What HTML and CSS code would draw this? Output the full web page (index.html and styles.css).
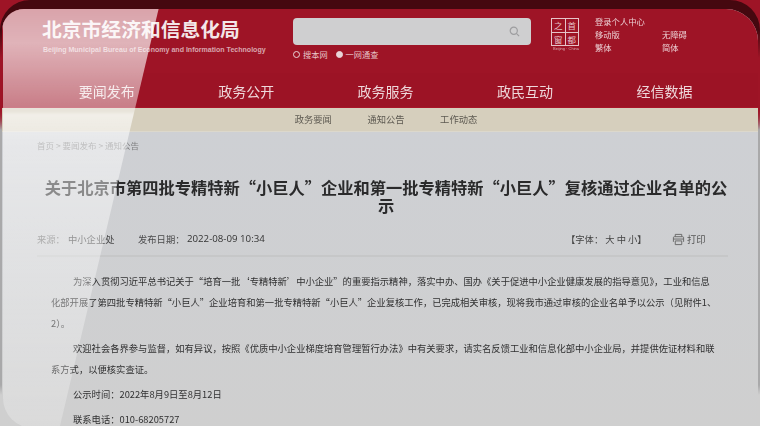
FILE: index.html
```html
<!DOCTYPE html>
<html lang="zh-CN">
<head>
<meta charset="utf-8">
<title>关于北京市第四批专精特新“小巨人”企业和第一批专精特新“小巨人”复核通过企业名单的公示</title>
<link rel="stylesheet" href="styles.css">
</head>
<body>
<div class="bezel">
  <div class="screen">
    <div class="content">
      <header class="header">
        <div class="brand">
          <div class="brand-cn">北京市经济和信息化局</div>
          <div class="brand-en">Beijing Municipal Bureau of Economy and Information Technology</div>
        </div>
        <div class="search">
          <div class="search-box">
            <svg class="search-icon" viewBox="0 0 12 12" width="11" height="11"><circle cx="5.2" cy="5.2" r="3.9" fill="none" stroke="#9d9d9f" stroke-width="1.3"/><path d="M8 8l3 3" stroke="#9d9d9f" stroke-width="1.3"/></svg>
          </div>
          <div class="scopes">
            <span class="scope"><i class="radio"></i>搜本网</span>
            <span class="scope"><i class="radio radio-on"></i>一网通查</span>
          </div>
        </div>
        <div class="seal">
          <div class="seal-box"><span>之</span><span>首</span><span>窗</span><span>都</span></div>
          <div class="seal-cap">Beijing · China</div>
        </div>
        <div class="links">
          <a class="link link-wide">登录个人中心</a>
          <a class="link">移动版</a><a class="link">无障碍</a>
          <a class="link">繁体</a><a class="link">简体</a>
        </div>
      </header>
      <nav class="nav">
        <a class="nav-item">要闻发布</a>
        <a class="nav-item">政务公开</a>
        <a class="nav-item">政务服务</a>
        <a class="nav-item">政民互动</a>
        <a class="nav-item">经信数据</a>
      </nav>
      <div class="subnav">
        <a>政务要闻</a><a>通知公告</a><a>工作动态</a>
      </div>
      <main class="main">
        <div class="crumb">首页 &gt; 要闻发布 &gt; 通知公告</div>
        <h1 class="title">关于北京市第四批专精特新“小巨人”企业和第一批专精特新“小巨人”复核通过企业名单的公示</h1>
        <div class="meta">
          <span class="meta-source">来源&#65306;</span><span class="meta-org">中小企业处</span>
          <span class="meta-date">发布日期&#65306;</span><span class="meta-time">2022-08-09 10:34</span>
          <span class="meta-font">【字体&#65306; 大 中 小】</span>
          <span class="meta-print">
            <svg viewBox="0 0 14 14" width="13" height="13"><path d="M3.5 4V1.500h7V4M1.500 9.500V5a1 1 0 0 1 1-1h9a1 1 0 0 1 1 1v4.500M1.500 6.500h11" fill="none" stroke="#666" stroke-width="1"/><path d="M3.500 8.500h7v4h-7z" fill="none" stroke="#666" stroke-width="1"/></svg>打印
          </span>
        </div>
        <article class="article">
          <p>为深入贯彻习近平总书记关于“培育一批‘专精特新’中小企业”的重要指示精神&#65292;落实中办、国办《关于促进中小企业健康发展的指导意见》&#65292;工业和信息化部开展了第四批专精特新“小巨人”企业培育和第一批专精特新“小巨人”企业复核工作&#65292;已完成相关审核&#65292;现将我市通过审核的企业名单予以公示&#65288;见附件1、2&#65289;。</p>
          <p>欢迎社会各界参与监督&#65292;如有异议&#65292;按照《优质中小企业梯度培育管理暂行办法》中有关要求&#65292;请实名反馈工业和信息化部中小企业局&#65292;并提供佐证材料和联系方式&#65292;以便核实查证。</p>
          <p>公示时间&#65306;2022年8月9日至8月12日</p>
          <p class="article-last">联系电话&#65306;010-68205727</p>
        </article>
      </main>
    </div>
    <div class="gloss"></div>
  </div>
</div>
</body>
</html>
```

FILE: styles.css
```css
html, body {
  margin: 0;
  padding: 0;
  height: 100%;
}
body {
  width: 760px;
  height: 426px;
  overflow: hidden;
  background: linear-gradient(#9e1426 0, #9e1426 108px, #a9a9aa 130px, #a9a9aa 385px, #cfcfcf 395px);
  font-family: "Noto Sans CJK SC", "Liberation Sans", sans-serif;
}
.bezel {
  height: 426px;
  box-sizing: border-box;
  padding: 9px 2px 0 2px;
  border-radius: 30px 30px 0 0;
  background: linear-gradient(#45080f 0, #45080f 30px, #9e1426 58px, #9e1426 108px, rgba(160,160,160,0) 130px);
}
.screen {
  position: relative;
  height: 417px;
  overflow: hidden;
  border-radius: 22px 32px 0 0;
  background: linear-gradient(#ced0d4 120px, #cfcfcf 420px);
}
.content {
  margin-left: -2px;
  margin-top: -9px;
  margin-right: -2px;
  padding-top: 9px;
  filter: blur(0.45px);
}
.header {
  height: 64px;
  display: flex;
  background: #9e1426;
}
.brand {
  width: 251px;
  margin-left: 42px;
  padding-top: 6px;
  color: #f3e6e8;
}
.brand-cn {
  font-size: 19.800px;
  font-weight: 700;
  line-height: 28px;
  white-space: nowrap;
}
.brand-en {
  font-family: "Liberation Sans", sans-serif;
  font-size: 7.060px;
  font-weight: 700;
  line-height: 10px;
  margin-top: 2px;
  margin-left: 1px;
  color: #d9a7af;
  white-space: nowrap;
}
.search {
  width: 258px;
  padding-top: 9px;
}
.search-box {
  width: 238px;
  height: 27px;
  border-radius: 4px;
  background: #cfcfd0;
  display: flex;
  align-items: center;
  justify-content: flex-end;
  padding-right: 11px;
  box-sizing: border-box;
}
.scopes {
  display: flex;
  gap: 8px;
  margin-top: 3px;
  color: #e6c4c9;
  font-size: 8.200px;
  line-height: 12px;
}
.scope {
  display: flex;
  align-items: center;
  gap: 3px;
}
.radio {
  width: 7px;
  height: 7px;
  box-sizing: border-box;
  border: 1.500px solid #e9d5d8;
  border-radius: 50%;
}
.radio-on {
  background: #e9d5d8;
}
.seal {
  width: 44px;
  padding-top: 9px;
  display: flex;
  flex-direction: column;
  align-items: flex-start;
}
.seal-box {
  width: 28px;
  height: 28px;
  box-sizing: border-box;
  border: 1.500px solid #e6c3c8;
  display: grid;
  grid-template-columns: 1fr 1fr;
  grid-template-rows: 1fr 1fr;
  gap: 1px;
  background: #e6c3c8;
  color: #e6c3c8;
  font-size: 8.500px;
  line-height: 12px;
  text-align: center;
}
.seal-box span {
  background: #9e1426;
  overflow: hidden;
}
.seal-cap {
  font-family: "Liberation Sans", sans-serif;
  font-size: 4px;
  line-height: 6px;
  margin-top: 0;
  margin-left: -1px;
  width: 32px;
  white-space: nowrap;
  text-align: center;
  color: #dba9b1;
}
.links {
  padding-top: 6px;
  display: grid;
  grid-template-columns: 67px 40px;
  grid-auto-rows: 13px;
  color: #eccfd3;
  font-size: 8.300px;
  line-height: 13px;
}
.link-wide {
  grid-column: 1 / 3;
}
.nav {
  height: 35px;
  padding-left: 37px;
  display: grid;
  grid-template-columns: repeat(5, 139.450px);
  background: #9c1325;
  box-sizing: border-box;
  align-items: center;
  color: #eed8db;
  font-size: 14px;
  line-height: 36px;
  border-bottom: 1px solid #a81528;
}
.nav-item {
  text-align: center;
}
.subnav {
  height: 24px;
  box-sizing: border-box;
  display: flex;
  justify-content: center;
  gap: 35.500px;
  padding-left: 12px;
  background: #d6cfbd;
  border-bottom: 1px solid #dcd8cc;
  color: #5e5a52;
  font-size: 9.300px;
  line-height: 23px;
}
.main {
  padding: 7px 32px 0 37px;
  color: #333;
}
.crumb {
  font-size: 8.500px;
  line-height: 13px;
  color: #808082;
}
.title {
  margin: 26px 0 0 3px;
  width: 692px;
  font-size: 16.250px;
  font-weight: 700;
  line-height: 18px;
  text-align: center;
  color: #2a2a2b;
}
.meta {
  display: flex;
  align-items: center;
  height: 16px;
  margin-top: 17px;
  font-size: 9.300px;
  line-height: 16px;
  color: #4a4a4b;
  padding-bottom: 8px;
  border-bottom: 2px solid #c6c7c8;
  width: 691px;
}
.meta-source {
  width: 31px;
  color: #777;
}
.meta-org {
  width: 70px;
}
.meta-date {
  width: 49px;
}
.meta-time {
  width: 379px;
  font-family: "Open Sans", sans-serif;
  font-size: 9.700px;
  color: #333;
  white-space: nowrap;
}
.meta-font {
  width: 106px;
  white-space: nowrap;
  color: #444;
}
.meta-print {
  display: flex;
  align-items: center;
  gap: 2px;
  color: #555;
}
.article {
  margin: 14px 0 0 14px;
  width: 667px;
  font-size: 9.300px;
  line-height: 21px;
  color: #303031;
}
.article p {
  margin: 0 0 4px;
  text-indent: 22px;
}
.article .article-last {
  margin: 1px 0 0;
  line-height: 12px;
  padding-top: 4px;
}
.gloss {
  position: absolute;
  left: 1px;
  top: -6px;
  width: 157px;
  height: 425px;
  border-radius: 22px 0 0 30px;
  clip-path: polygon(0 0, 100% 0, 36% 100%, 0 100%);
  background: linear-gradient(rgba(255,255,255,.6) 0, rgba(255,255,255,.68) 40px, rgba(255,255,255,.44) 108px, rgba(255,255,255,.66) 112px, rgba(255,255,255,.5) 140px, rgba(255,255,255,.34) 300px, rgba(255,255,255,.24) 425px);
}
```
